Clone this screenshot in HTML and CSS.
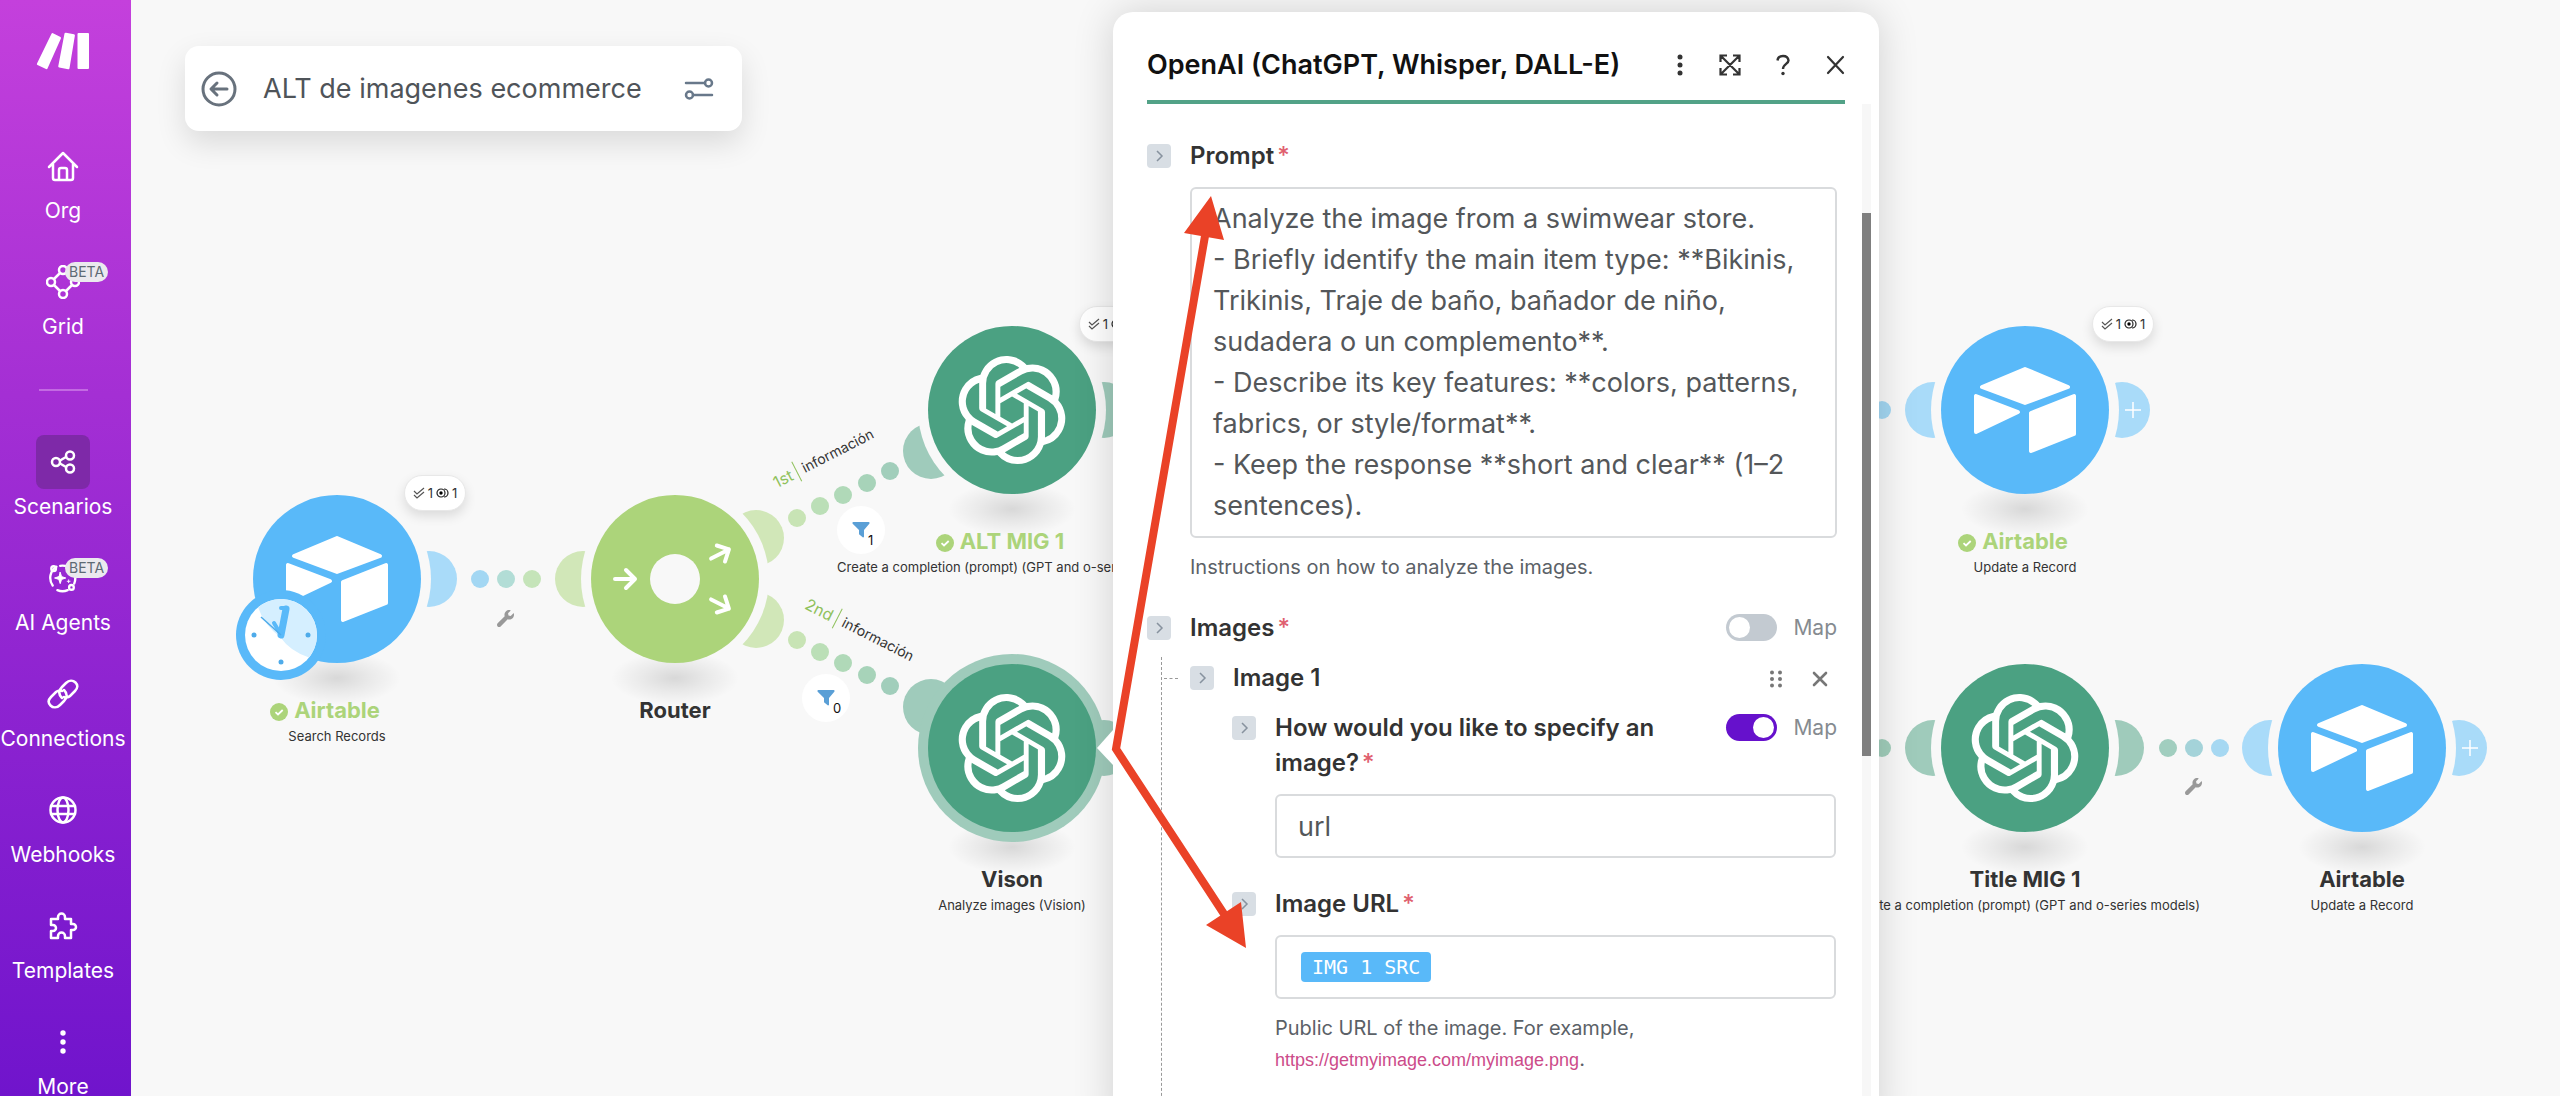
FILE: index.html
```html
<!DOCTYPE html>
<html lang="en">
<head>
    <meta charset="UTF-8">
    <meta name="viewport" content="width=device-width, initial-scale=1.0">
    <title>ALT de imagenes ecommerce</title>
    <link rel="stylesheet" href="styles.css">
</head>
<body>
    <!-- Shared symbols -->
    <svg class="symbols" width="0" height="0" aria-hidden="true">
        <symbol id="openai" viewBox="0 0 24 24">
            <path d="M22.2819 9.8211a5.9847 5.9847 0 0 0-.5157-4.9108 6.0462 6.0462 0 0 0-6.5098-2.9A6.0651 6.0651 0 0 0 4.9807 4.1818a5.9847 5.9847 0 0 0-3.9977 2.9 6.0462 6.0462 0 0 0 .7427 7.0966 5.98 5.98 0 0 0 .511 4.9107 6.051 6.051 0 0 0 6.5146 2.9001A5.9847 5.9847 0 0 0 13.2599 24a6.0557 6.0557 0 0 0 5.7718-4.2058 5.9894 5.9894 0 0 0 3.9977-2.9001 6.0557 6.0557 0 0 0-.7475-7.0729zm-9.022 12.6081a4.4755 4.4755 0 0 1-2.8764-1.0408l.1419-.0804 4.7783-2.7582a.7948.7948 0 0 0 .3927-.6813v-6.7369l2.02 1.1686a.071.071 0 0 1 .038.052v5.5826a4.504 4.504 0 0 1-4.4945 4.4944zm-9.6607-4.1254a4.4708 4.4708 0 0 1-.5346-3.0137l.142.0852 4.783 2.7582a.7712.7712 0 0 0 .7806 0l5.8428-3.3685v2.3324a.0804.0804 0 0 1-.0332.0615L9.74 19.9502a4.4992 4.4992 0 0 1-6.1408-1.6464zM2.3408 7.8956a4.485 4.485 0 0 1 2.3655-1.9728V11.6a.7664.7664 0 0 0 .3879.6765l5.8144 3.3543-2.0201 1.1685a.0757.0757 0 0 1-.071 0l-4.8303-2.7865A4.504 4.504 0 0 1 2.3408 7.872zm16.5963 3.8558L13.1038 8.364 15.1192 7.2a.0757.0757 0 0 1 .071 0l4.8303 2.7913a4.4944 4.4944 0 0 1-.6765 8.1042v-5.6772a.79.79 0 0 0-.407-.667zm2.0107-3.0231l-.142-.0852-4.7735-2.7818a.7759.7759 0 0 0-.7854 0L9.409 9.2297V6.8974a.0662.0662 0 0 1 .0284-.0615l4.8303-2.7866a4.4992 4.4992 0 0 1 6.6802 4.66zM8.3065 12.863l-2.02-1.1638a.0804.0804 0 0 1-.038-.0567V6.0742a4.4992 4.4992 0 0 1 7.3757-3.4537l-.142.0805L8.704 5.459a.7948.7948 0 0 0-.3927.6813zm1.0976-2.3654l2.602-1.4998 2.6069 1.4998v2.9994l-2.5974 1.4997-2.6067-1.4997Z" fill="#fff"/>
        </symbol>
        <symbol id="airtable" viewBox="-54 -54 108 108">
            <g fill="#fff" stroke="#fff" stroke-width="4" stroke-linejoin="round">
                <path d="M-43-23 0-41 43-23 0-7Z"/>
                <path d="M-49-14V22L-7 2Z"/>
                <path d="M49-14V24L6 41V3Z"/>
            </g>
        </symbol>
        <symbol id="router" viewBox="-84 -84 168 168">
            <circle r="25" fill="#f8f8f8"/>
            <g fill="none" stroke="#fff" stroke-width="4" stroke-linecap="round" stroke-linejoin="round">
                <path d="M-60 0H-40M-49-9-40 0-49 9"/>
                <path transform="translate(45 -25) rotate(-27)" d="M-10 0H10M1-9 10 0 1 9"/>
                <path transform="translate(45 25) rotate(27)" d="M-10 0H10M1-9 10 0 1 9"/>
            </g>
        </symbol>
        <symbol id="check" viewBox="0 0 18 18">
            <circle cx="9" cy="9" r="9" fill="#acd47a"/>
            <path d="M5.500 9.200 8 11.500 12.700 7" fill="none" stroke="#fff" stroke-width="1.800"/>
        </symbol>
        <symbol id="steps" viewBox="0 0 12 12">
            <path d="M1 4 4 7 11 1M1 8 4 11 11 5" fill="none" stroke="#555" stroke-width="1.200"/>
        </symbol>
        <symbol id="coins" viewBox="0 0 13 10">
            <g fill="none" stroke="#222" stroke-width="1.200">
                <circle cx="5" cy="5" r="4"/>
                <path d="M8 1a4 4 0 0 1 0 8"/>
            </g>
            <circle cx="5" cy="5" r="1.700" fill="#000"/>
        </symbol>
        <symbol id="wrench" viewBox="0 0 512 512">
            <path fill="#999" d="M507.700 109.100c-2.200-9-13.500-12.100-20.100-5.500l-74.400 74.400-67.900-11.300L334 98.900l74.400-74.400c6.600-6.600 3.400-17.900-5.700-20.200-47.400-11.700-99.600.9-136.600 37.900-39.600 39.600-50.500 97.100-34.100 147.200L18.700 402.800c-25 25-25 65.500 0 90.500s65.500 25 90.500 0l213.200-213.200c50.100 16.700 107.500 5.700 147.400-34.200 37.100-37.100 49.700-89.300 37.900-136.800z"/>
        </symbol>
        <symbol id="funnel" viewBox="0 0 18 16">
            <path fill="#5a9fd6" d="M1.500 0h15a1 1 0 0 1 .8 1.700L12 8v6.500a.8.8 0 0 1-1.300.7L7 12.200V8L.7 1.700A1 1 0 0 1 1.500 0Z"/>
        </symbol>
        <symbol id="chevron" viewBox="0 0 24 24">
            <path d="M10 7 15 12 10 17" fill="none" stroke="#87929e" stroke-width="1.500"/>
        </symbol>
    </svg>

    <nav class="sidebar">
        <a class="logo" href="#" aria-label="Home">
            <svg width="54" height="38" viewBox="0 0 54 38" fill="#fff">
                <path d="M17 1.200 24.500 5Q25.300 5.500 24.900 6.500L11.500 36.500Q11 37.500 10 37L1.500 33Q.5 32.500 1 31.500L15.500 1.800Q16 .8 17 1.200Z"/>
                <path d="M30 .8 38 2.300Q39 2.500 38.900 3.500L33.500 36.300Q33.300 37.500 32.200 37.200L23.200 35.500Q22 35.200 22.300 34L28.500 1.600Q28.800.6 30 .8Z"/>
                <rect x="41.500" y="1" width="11.500" height="36" rx="1"/>
            </svg>
        </a>
        <ul class="menu">
            <li><a class="item" href="#">
                <span class="item-icon"><svg width="32" height="32" viewBox="0 0 32 32"><path d="M2 17 16 3 30 17M6 14V28Q6 30 8 30H24Q26 30 26 28V14M12 30V20Q12 18 14 18H18Q20 18 20 20V30"/></svg></span>
                Org</a></li>
            <li><a class="item" href="#">
                <span class="item-icon"><svg width="34" height="34" viewBox="0 0 34 34"><circle cx="17" cy="5" r="4"/><circle cx="5" cy="17" r="4"/><circle cx="29" cy="17" r="4"/><circle cx="17" cy="29" r="4"/><path d="M14 8 8 14M20 8 26 14M8 20 14 26M26 20 20 26"/></svg><span class="beta">BETA</span></span>
                Grid</a></li>
        </ul>
        <hr class="divider">
        <ul class="menu">
            <li><a class="item active" href="#">
                <span class="item-icon"><svg width="26" height="26" viewBox="0 0 26 26"><circle cx="6" cy="13" r="4"/><circle cx="20" cy="6.500" r="4"/><circle cx="20" cy="19.500" r="4"/><path d="M10 11.500 16 8M10 14.500 16 18"/></svg></span>
                Scenarios</a></li>
            <li><a class="item" href="#">
                <span class="item-icon"><svg width="30" height="30" viewBox="0 0 32 32"><path d="M9 4A14 14 0 0 0 5 24M10 29A14 14 0 0 0 21 29M28 22A14 14 0 0 0 13 3"/><circle cx="6" cy="6" r="2.500"/><circle cx="25" cy="26" r="2.500"/><path d="M13 10 14.500 14.500 19 16 14.500 17.500 13 22 11.500 17.500 7 16 11.500 14.500ZM22 18v3M20.500 19.500h3" fill="#fff" stroke-width="1"/></svg><span class="beta">BETA</span></span>
                AI Agents</a></li>
            <li><a class="item" href="#">
                <span class="item-icon"><svg width="32" height="32" viewBox="0 0 32 32"><path d="M15 20C11 16 12 12 15 9L19 5C22 2 26 2 28.500 4.500S31 10 28 13L23 18C21 20 18 20 17 19M17 12C21 16 20 20 17 23L13 27C10 30 6 30 3.500 27.500S1 22 4 19L9 14C11 12 14 12 15 13"/></svg></span>
                Connections</a></li>
            <li><a class="item" href="#">
                <span class="item-icon"><svg width="30" height="30" viewBox="0 0 30 30"><circle cx="15" cy="15" r="12.500"/><ellipse cx="15" cy="15" rx="5.500" ry="12.500"/><path d="M3 11H27M3 19H27"/></svg></span>
                Webhooks</a></li>
            <li><a class="item" href="#">
                <span class="item-icon"><svg width="30" height="30" viewBox="0 0 30 30"><path d="M3 8H10V6A3.500 3.500 0 0 1 17 6V8H23V13H25A3 3 0 0 1 25 19H23V27H17V25A3 3 0 0 0 10 25V27H3V20H5A3 3 0 0 0 5 14H3Z"/></svg></span>
                Templates</a></li>
            <li><a class="item" href="#">
                <span class="item-icon"><svg width="30" height="30" viewBox="0 0 30 30"><g fill="#fff" stroke="none"><circle cx="15" cy="6" r="2.700"/><circle cx="15" cy="15" r="2.700"/><circle cx="15" cy="24" r="2.700"/></g></svg></span>
                More</a></li>
        </ul>
    </nav>

    <main class="canvas">
        <!-- Links and ports between the modules -->
        <svg class="links" aria-hidden="true">
            <defs>
                <radialGradient id="ground">
                    <stop offset="0" stop-color="#000" stop-opacity=".13"/>
                    <stop offset=".5" stop-color="#000" stop-opacity=".06"/>
                    <stop offset="1" stop-color="#000" stop-opacity="0"/>
                </radialGradient>
            </defs>
            <g transform="translate(-131 0)">
                <g fill="#a9dbf9">
                    <circle cx="429" cy="579" r="28"/>
                    <circle cx="1933" cy="410" r="28"/>
                    <circle cx="2122" cy="410" r="28"/>
                    <circle cx="2270" cy="748" r="28"/>
                    <circle cx="2459" cy="748" r="28"/>
                </g>
                <g fill="#d1e7b8">
                    <circle cx="583" cy="579" r="28"/>
                    <circle cx="756" cy="538" r="28"/>
                    <circle cx="756" cy="620" r="28"/>
                </g>
                <g fill="#9fcbbb">
                    <circle cx="931" cy="451" r="28"/>
                    <circle cx="1104" cy="410" r="28"/>
                    <circle cx="931" cy="707" r="28"/>
                    <circle cx="1104" cy="748" r="28"/>
                    <circle cx="1933" cy="748" r="28"/>
                    <circle cx="2116" cy="748" r="28"/>
                </g>
                <g fill="#f8f8f8">
                    <circle cx="337" cy="579" r="94"/>
                    <circle cx="675" cy="579" r="94"/>
                    <circle cx="1012" cy="410" r="94"/>
                    <circle cx="2025" cy="410" r="94"/>
                    <circle cx="2025" cy="748" r="94"/>
                    <circle cx="2362" cy="748" r="94"/>
                </g>
                <g fill="url(#ground)">
                    <ellipse cx="337" cy="678" rx="64" ry="27"/>
                    <ellipse cx="675" cy="678" rx="64" ry="27"/>
                    <ellipse cx="1012" cy="509" rx="64" ry="27"/>
                    <ellipse cx="1012" cy="847" rx="64" ry="27"/>
                    <ellipse cx="2025" cy="509" rx="64" ry="27"/>
                    <ellipse cx="2025" cy="847" rx="64" ry="27"/>
                    <ellipse cx="2362" cy="847" rx="64" ry="27"/>
                </g>
                <circle cx="1012" cy="748" r="94" fill="#9fcbbb"/>
                <circle cx="480" cy="579" r="9" fill="#a3d7f3"/>
                <circle cx="506" cy="579" r="9" fill="#b2ddd6"/>
                <circle cx="532" cy="579" r="9" fill="#c5e4b9"/>
                <circle cx="797" cy="518" r="9" fill="#c8e4b5"/>
                <circle cx="820" cy="506" r="9" fill="#bbdfb7"/>
                <circle cx="843" cy="495" r="9" fill="#b0d9b8"/>
                <circle cx="867" cy="483" r="9" fill="#a7d3b9"/>
                <circle cx="890" cy="471" r="9" fill="#a1cebb"/>
                <circle cx="797" cy="640" r="9" fill="#c8e4b5"/>
                <circle cx="820" cy="652" r="9" fill="#bbdfb7"/>
                <circle cx="843" cy="663" r="9" fill="#b0d9b8"/>
                <circle cx="867" cy="675" r="9" fill="#a7d3b9"/>
                <circle cx="890" cy="686" r="9" fill="#a1cebb"/>
                <circle cx="1882" cy="410" r="9" fill="#a3d7f3"/>
                <circle cx="1882" cy="748" r="9" fill="#a1cebb"/>
                <circle cx="2168" cy="748" r="9" fill="#a1cebf"/>
                <circle cx="2194" cy="748" r="9" fill="#a4d3d9"/>
                <circle cx="2220" cy="748" r="9" fill="#a6d8f2"/>
                <path d="M2125 410H2141M2133 402V418M2462 748H2478M2470 740V756" stroke="#fff" stroke-width="1.500"/>
                <use href="#wrench" x="497" y="610" width="17" height="17"/>
                <use href="#wrench" x="2185" y="778" width="17" height="17"/>
            </g>
        </svg>

        <header class="titlebar">
            <button class="icon-btn" aria-label="Back">
                <svg width="36" height="36" viewBox="0 0 36 36" fill="none" stroke="#68727d" stroke-width="3" stroke-linecap="round" stroke-linejoin="round"><circle cx="18" cy="18" r="16"/><path d="M26 18H11M16 12 10 18 16 24"/></svg>
            </button>
            <h1>ALT de imagenes ecommerce</h1>
            <button class="icon-btn" aria-label="Settings">
                <svg width="30" height="24" viewBox="0 0 30 24" fill="none" stroke="#68788a" stroke-width="2.500" stroke-linecap="round"><path d="M2 6H21M9 18H28"/><circle cx="24.500" cy="6" r="3.500"/><circle cx="5.500" cy="18" r="3.500"/></svg>
            </button>
        </header>

        <div class="node blue n-search">
            <div class="disc"><svg width="108" height="108"><use href="#airtable"/></svg></div>
            <h2 class="done"><svg width="18" height="18"><use href="#check"/></svg>Airtable</h2>
            <p>Search Records</p>
            <div class="pill"><svg width="12" height="12"><use href="#steps"/></svg>1<svg width="13" height="10"><use href="#coins"/></svg>1</div>
            <svg class="clock" width="90" height="90" viewBox="-45 -45 90 90">
                <circle r="45" fill="#59b9f9"/>
                <circle r="36" fill="#fff"/>
                <path d="M-23-27.700A36 36 0 0 1 28 22.600Q9 16 0 3Q-17-10-23-27.700Z" fill="#d5efff"/>
                <g fill="#4eabea"><circle cx="-27" r="2.500"/><circle cx="27" r="2.500"/><circle cy="27" r="2.500"/></g>
                <path d="M0 0 5-26" stroke="#59b9f9" stroke-width="7" stroke-linecap="round"/>
                <path d="M0-27H5M0 0-7-12" fill="none" stroke="#59b9f9" stroke-width="4" stroke-linecap="round"/>
                <path d="M0 0-20-18" stroke="#4eabea" stroke-width="1.500"/>
            </svg>
        </div>
        <div class="node green n-router">
            <div class="disc"><svg width="168" height="168"><use href="#router"/></svg></div>
            <h2>Router</h2>
        </div>
        <div class="node teal n-alt">
            <div class="disc"><svg width="108" height="108"><use href="#openai"/></svg></div>
            <h2 class="done"><svg width="18" height="18"><use href="#check"/></svg>ALT MIG 1</h2>
            <p>Create a completion (prompt) (GPT and o-series models)</p>
            <div class="pill"><svg width="12" height="12"><use href="#steps"/></svg>1<svg width="13" height="10"><use href="#coins"/></svg>1</div>
        </div>
        <div class="node teal n-vison">
            <div class="disc"><svg width="108" height="108"><use href="#openai"/></svg></div>
            <h2>Vison</h2>
            <p>Analyze images (Vision)</p>
        </div>
        <div class="node blue n-update">
            <div class="disc"><svg width="108" height="108"><use href="#airtable"/></svg></div>
            <h2 class="done"><svg width="18" height="18"><use href="#check"/></svg>Airtable</h2>
            <p>Update a Record</p>
            <div class="pill"><svg width="12" height="12"><use href="#steps"/></svg>1<svg width="13" height="10"><use href="#coins"/></svg>1</div>
        </div>
        <div class="node teal n-title">
            <div class="disc"><svg width="108" height="108"><use href="#openai"/></svg></div>
            <h2>Title MIG 1</h2>
            <p>Create a completion (prompt) (GPT and o-series models)</p>
        </div>
        <div class="node blue n-last">
            <div class="disc"><svg width="108" height="108"><use href="#airtable"/></svg></div>
            <h2>Airtable</h2>
            <p>Update a Record</p>
        </div>

        <div class="route route-1"><b>1st</b><span>información</span></div>
        <div class="route route-2"><b>2nd</b><span>información</span></div>
        <div class="filter filter-1"><svg width="18" height="16"><use href="#funnel"/></svg><span>1</span></div>
        <div class="filter filter-2"><svg width="18" height="16"><use href="#funnel"/></svg><span>0</span></div>

        <form class="panel">
            <div class="panel-head">
                <h2>OpenAI (ChatGPT, Whisper, DALL-E)</h2>
                <div class="tools">
                    <button type="button" class="icon-btn" aria-label="Options"><svg width="16" height="22" viewBox="0 0 16 22" fill="#333"><circle cx="8" cy="3" r="2.500"/><circle cx="8" cy="11" r="2.500"/><circle cx="8" cy="19" r="2.500"/></svg></button>
                    <button type="button" class="icon-btn" aria-label="Expand"><svg width="22" height="22" viewBox="0 0 22 22" fill="none" stroke="#333" stroke-width="2.200"><path d="M1.500 8V1.500H8M14 1.500H20.500V8M20.500 14V20.500H14M8 20.500H1.500V14M2 2 20 20M20 2 2 20"/></svg></button>
                    <button type="button" class="icon-btn" aria-label="Help"><svg width="22" height="22" viewBox="0 0 22 22" fill="none" stroke="#333" stroke-width="2.400"><path d="M5.500 6.500Q6 2 11 2T16.500 6.500C16.500 10 11 10 11 15"/><circle cx="11" cy="19.500" r="1.700" fill="#333" stroke="none"/></svg></button>
                    <button type="button" class="icon-btn" aria-label="Close"><svg width="20" height="22" viewBox="0 0 20 22" stroke="#333" stroke-width="2.200" stroke-linecap="round"><path d="M3 3 18 19M18 3 3 19"/></svg></button>
                </div>
            </div>
            <div class="panel-body">
                <section class="field">
                    <div class="label-row">
                        <button type="button" class="fold" aria-label="Collapse"><svg width="24" height="24"><use href="#chevron"/></svg></button>
                        <label for="prompt">Prompt <i>*</i></label>
                    </div>
                    <textarea id="prompt" rows="8" spellcheck="false">Analyze the image from a swimwear store.
- Briefly identify the main item type: **Bikinis, Trikinis, Traje de baño, bañador de niño, sudadera o un complemento**.
- Describe its key features: **colors, patterns, fabrics, or style/format**.
- Keep the response **short and clear** (1–2 sentences).</textarea>
                    <p class="hint">Instructions on how to analyze the images.</p>
                </section>
                <section class="images">
                    <div class="label-row">
                        <button type="button" class="fold" aria-label="Collapse"><svg width="24" height="24"><use href="#chevron"/></svg></button>
                        <span class="label">Images <i>*</i></span>
                        <label class="map"><input type="checkbox">Map</label>
                    </div>
                    <div class="tree">
                        <div class="label-row">
                            <button type="button" class="fold" aria-label="Collapse"><svg width="24" height="24"><use href="#chevron"/></svg></button>
                            <span class="label">Image 1</span>
                            <div class="row-tools">
                                <button type="button" class="icon-btn" aria-label="Move"><svg width="14" height="18" viewBox="0 0 14 18" fill="#777"><circle cx="3" cy="2.500" r="2"/><circle cx="11" cy="2.500" r="2"/><circle cx="3" cy="9" r="2"/><circle cx="11" cy="9" r="2"/><circle cx="3" cy="15.500" r="2"/><circle cx="11" cy="15.500" r="2"/></svg></button>
                                <button type="button" class="icon-btn" aria-label="Remove"><svg width="18" height="18" viewBox="0 0 18 18" stroke="#777" stroke-width="2.600" stroke-linecap="round"><path d="M3 3 15 15M15 3 3 15"/></svg></button>
                            </div>
                        </div>
                        <div class="nested">
                            <div class="field">
                                <div class="label-row">
                                    <button type="button" class="fold" aria-label="Collapse"><svg width="24" height="24"><use href="#chevron"/></svg></button>
                                    <label for="kind">How would you like to specify an image? <i>*</i></label>
                                    <label class="map"><input type="checkbox" checked>Map</label>
                                </div>
                                <input class="box" id="kind" type="text" value="url">
                            </div>
                            <div class="field">
                                <div class="label-row">
                                    <button type="button" class="fold" aria-label="Collapse"><svg width="24" height="24"><use href="#chevron"/></svg></button>
                                    <span class="label" id="url-label">Image URL <i>*</i></span>
                                </div>
                                <div class="box" role="textbox" tabindex="0" aria-labelledby="url-label"><span class="chip">IMG 1 SRC</span></div>
                                <p class="hint">Public URL of the image. For example,<br><a href="#">https://getmyimage.com/myimage.png</a>.</p>
                            </div>
                        </div>
                    </div>
                </section>
            </div>
            <div class="scrollbar"><div class="thumb"></div></div>
        </form>

        <!-- Red arrows drawn over the panel -->
        <svg class="arrows" aria-hidden="true">
            <g transform="translate(-131 0)">
                <path d="M1113 730 1097 748 1113 765Z" fill="#fff"/>
                <path d="M1205 236 1116 749 1226 917" fill="none" stroke="#ea4227" stroke-width="8"/>
                <path d="M1211 196 1184 233 1224 240ZM1246 948 1206 925 1241 902Z" fill="#ea4227"/>
            </g>
        </svg>
    </main>
</body>
</html>
```
FILE: styles.css
```css
* {
    box-sizing: border-box;
}

body {
    font-family: Inter, "Liberation Sans", sans-serif;
    background-color: #f8f8f8;
    color: #333333;
    margin: 0;
    display: flex;
    height: 100vh;
    overflow: hidden;
}

h1, h2, p, ul {
    margin: 0;
    padding: 0;
}

button {
    border: none;
    background: none;
    padding: 0;
    cursor: pointer;
}

svg {
    display: block;
    flex: none;
}

.symbols {
    position: absolute;
}

.icon-btn {
    display: flex;
}

/* Sidebar */
.sidebar {
    flex: none;
    width: 131px;
    padding-right: 5px;
    background: linear-gradient(#c440dc, #a42fd4 36%, #7014cc);
    overflow: hidden;
}

.logo {
    display: flex;
    justify-content: center;
    padding-top: 32px;
    height: 139px;
}

.menu {
    list-style: none;
}

.item {
    display: flex;
    flex-direction: column;
    align-items: center;
    height: 116px;
    color: #ffffff;
    font-size: 21px;
    line-height: 36px;
    text-decoration: none;
    white-space: nowrap;
}

.item-icon {
    position: relative;
    display: flex;
    align-items: center;
    justify-content: center;
    width: 54px;
    height: 54px;
    border-radius: 8px;
}

.item-icon svg {
    fill: none;
    stroke: #ffffff;
    stroke-width: 2.500px;
    stroke-linejoin: round;
    stroke-linecap: round;
}

.active .item-icon {
    background-color: #7e29a8;
}

.beta {
    position: absolute;
    left: 29px;
    top: 7px;
    padding: 0 4px;
    border-radius: 10px;
    background-color: #ebe9ee;
    color: #5d6a74;
    font-size: 14px;
    line-height: 20px;
}

.divider {
    width: 49px;
    margin: 18px auto 44px;
    border: none;
    border-top: 2px solid #c36ae2;
}

/* Canvas */
.canvas {
    position: relative;
    flex: 1;
    overflow: hidden;
}

.links, .arrows {
    position: absolute;
    left: 0;
    top: 0;
    width: 100%;
    height: 100%;
    pointer-events: none;
}

.titlebar {
    position: absolute;
    left: 54px;
    top: 46px;
    display: flex;
    align-items: center;
    gap: 26px;
    width: 557px;
    height: 85px;
    padding: 0 28px 0 16px;
    border-radius: 14px;
    background-color: #ffffff;
    box-shadow: 0 12px 30px rgba(0, 0, 0, 0.12);
}

.titlebar h1 {
    flex: 1;
    color: #4f5459;
    font-size: 27px;
    font-weight: 400;
}

/* Modules */
.node {
    position: absolute;
    width: 168px;
    display: flex;
    flex-direction: column;
    align-items: center;
    white-space: nowrap;
}

.n-search { left: 122px; top: 495px; }
.n-router { left: 460px; top: 495px; }
.n-alt { left: 797px; top: 326px; }
.n-vison { left: 797px; top: 664px; }
.n-update { left: 1810px; top: 326px; }
.n-title { left: 1810px; top: 664px; }
.n-last { left: 2147px; top: 664px; }

.disc {
    display: flex;
    align-items: center;
    justify-content: center;
    width: 168px;
    height: 168px;
    border-radius: 50%;
}

.blue .disc { background-color: #59b9f9; }
.green .disc { background-color: #acd47a; }
.teal .disc { background-color: #4ba182; }

.node h2 {
    position: relative;
    margin-top: 33px;
    font-size: 22px;
    font-weight: 700;
    line-height: 28px;
}

.node .done {
    color: #acd47a;
}

.done svg {
    position: absolute;
    right: 100%;
    top: 7px;
    margin-right: 6px;
}

.node p {
    margin-top: 3px;
    font-size: 13px;
    line-height: 18px;
}

.pill {
    position: absolute;
    left: 151px;
    top: -20px;
    display: flex;
    align-items: center;
    justify-content: center;
    gap: 3px;
    width: 62px;
    height: 36px;
    border: 1px solid #e8e8e8;
    border-radius: 18px;
    background-color: #ffffff;
    box-shadow: 0 5px 12px rgba(0, 0, 0, 0.12);
    font-size: 13px;
}

.clock {
    position: absolute;
    left: -17px;
    top: 95px;
}

.route {
    position: absolute;
    display: flex;
    align-items: center;
    font-size: 14px;
    line-height: 22px;
}

.route b {
    padding-right: 5px;
    margin-right: 6px;
    border-right: 1px solid #8fc15c;
    color: #8fc15c;
    font-size: 16px;
    font-weight: 400;
}

.route-1 {
    left: 637px;
    top: 447px;
    transform: rotate(-27deg);
}

.route-2 {
    left: 669px;
    top: 619px;
    transform: rotate(27deg);
}

.filter {
    position: absolute;
    display: flex;
    align-items: center;
    justify-content: center;
    width: 48px;
    height: 48px;
    border-radius: 50%;
    background-color: #ffffff;
}

.filter span {
    position: absolute;
    left: 31px;
    top: 26px;
    font-size: 13px;
    color: #111111;
}

.filter-1 { left: 706px; top: 506px; }
.filter-2 { left: 671px; top: 674px; }

/* Settings panel */
.panel {
    position: absolute;
    left: 982px;
    top: 12px;
    bottom: -40px;
    width: 766px;
    border-radius: 20px;
    background-color: #ffffff;
    box-shadow: 0 0 40px rgba(0, 0, 0, 0.16);
}

.panel-head {
    display: flex;
    align-items: center;
    justify-content: space-between;
    height: 92px;
    margin: 0 34px;
    padding-top: 18px;
    border-bottom: 4px solid #52a287;
}

.panel-head h2 {
    color: #111111;
    font-size: 27px;
    font-weight: 600;
    line-height: 36px;
    white-space: nowrap;
}

.tools {
    display: flex;
    gap: 31px;
}

.panel-body {
    padding: 34px 42px 0 34px;
}

.label-row {
    display: flex;
    align-items: flex-start;
    gap: 19px;
}

.label-row > label:not(.map), .label {
    flex: 1;
    font-size: 24px;
    font-weight: 600;
    line-height: 35px;
}

.label-row i {
    margin-left: -3px;
    color: #e0606f;
    font-style: normal;
    font-weight: 500;
}

.fold {
    width: 24px;
    height: 24px;
    margin-top: 6px;
    border-radius: 4px;
    background-color: #d8dee4;
}

.map {
    display: flex;
    align-items: center;
    gap: 16px;
    height: 35px;
    color: #868b90;
    font-size: 21px;
}

.map input {
    appearance: none;
    width: 51px;
    height: 27px;
    margin: 0;
    padding: 3px;
    border-radius: 14px;
    background-color: #c3cad1;
}

.map input::before {
    content: "";
    display: block;
    width: 21px;
    height: 21px;
    border-radius: 50%;
    background-color: #ffffff;
}

.map input:checked {
    background-color: #6611cc;
}

.map input:checked::before {
    margin-left: 24px;
}

textarea, .box {
    display: block;
    border: 2px solid #d9dbdd;
    border-radius: 6px;
    background-color: #ffffff;
    color: #54575a;
    font-family: inherit;
    font-size: 27px;
}

textarea {
    width: 647px;
    margin: 14px 0 0 43px;
    padding: 9px 18px 10px 21px;
    line-height: 41px;
    resize: none;
    overflow: hidden;
}

.box {
    display: flex;
    align-items: center;
    width: 561px;
    height: 64px;
    margin: 14px 0 0 43px;
    padding: 0 21px;
}

.hint {
    margin: 14px 0 0 43px;
    color: #5b6167;
    font-size: 20px;
    line-height: 31px;
}

.hint a {
    color: #cc4b8a;
    font-family: "Liberation Sans", Arial, sans-serif;
    font-size: 18px;
    text-decoration: none;
}

.images {
    margin-top: 27px;
}

.tree {
    margin: 12px 0 0 14px;
    padding: 3px 0 60px 28px;
    border-left: 1px dashed #999999;
    position: relative;
}

.tree::before {
    content: "";
    position: absolute;
    left: 2px;
    top: 21px;
    width: 14px;
    border-top: 1px dashed #999999;
}

.row-tools {
    display: flex;
    align-items: center;
    gap: 28px;
    height: 35px;
    padding: 2px 8px 0 0;
}

.nested {
    display: flex;
    flex-direction: column;
    gap: 28px;
    margin: 15px 0 0 42px;
}

.nested label:not(.map) {
    padding-right: 40px;
}

.chip {
    margin-left: 3px;
    padding: 0 11px;
    border-radius: 4px;
    background-color: #59b9f9;
    color: #ffffff;
    font-family: "DejaVu Sans Mono", monospace;
    font-size: 20px;
    line-height: 30px;
}

.scrollbar {
    position: absolute;
    right: 8px;
    top: 92px;
    bottom: 0;
    width: 9px;
    padding-top: 109px;
    background-color: #f7f7f7;
}

.thumb {
    height: 543px;
    background-color: #7f7f7f;
}
```
